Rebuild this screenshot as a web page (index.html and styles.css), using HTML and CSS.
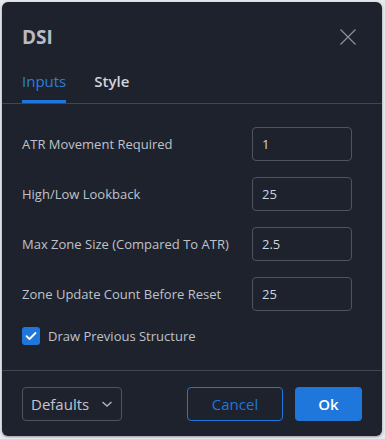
FILE: index.html
```html
<!DOCTYPE html>
<html>
<head>
<meta charset="utf-8">
<link rel="stylesheet" href="styles.css">
</head>
<body>
<div class="dialog">
  <div class="header">
    <div class="title">DSI</div>
    <div class="close">
      <svg width="16" height="16" viewBox="0 0 16 16"><path d="M0.5 0.5L15.5 15.5M15.5 0.5L0.5 15.5" stroke="#8f929b" stroke-width="1.2" fill="none"/></svg>
    </div>
  </div>
  <div class="tabs">
    <div class="tab active">Inputs</div>
    <div class="tab">Style</div>
  </div>
  <div class="content">
    <div class="row"><div class="label">ATR Movement Required</div><div class="input">1</div></div>
    <div class="row"><div class="label">High/Low Lookback</div><div class="input">25</div></div>
    <div class="row"><div class="label">Max Zone Size (Compared To ATR)</div><div class="input">2.5</div></div>
    <div class="row"><div class="label">Zone Update Count Before Reset</div><div class="input">25</div></div>
    <div class="check-row">
      <div class="checkbox">
        <svg width="12" height="10" viewBox="0 0 12 10"><path d="M1.5 5.2L4.5 8L10.5 2" stroke="#fff" stroke-width="1.8" fill="none" stroke-linecap="round" stroke-linejoin="round"/></svg>
      </div>
      <div class="check-label">Draw Previous Structure</div>
    </div>
  </div>
  <div class="footer">
    <div class="select">Defaults
      <svg width="12" height="8" viewBox="0 0 12 8"><path d="M1.5 2L6 6L10.5 2" stroke="#b2b5be" stroke-width="1.4" fill="none"/></svg>
    </div>
    <div class="spacer"></div>
    <div class="btn cancel">Cancel</div>
    <div class="btn ok">Ok</div>
  </div>
</div>
</body>
</html>
```
FILE: styles.css
```css
html, body { margin: 0; padding: 0; }
body {
  background: #e6e8ee;
  padding: 2px;
  font-family: "Open Sans", "Noto Sans", sans-serif;
}
.dialog {
  width: 380px;
  height: 434px;
  background: #1e222d;
  border-radius: 6px;
  display: flex;
  flex-direction: column;
  box-sizing: border-box;
  box-shadow: 0 1px 3px rgba(0,0,0,0.35);
}
.header {
  display: flex;
  align-items: center;
  justify-content: space-between;
  padding: 20px 26px 0 20px;
  height: 30px;
}
.title {
  font-size: 19px;
  font-weight: 700;
  color: #b8bbc4;
  line-height: 30px;
}
.close { width: 16px; height: 16px; display: flex; }
.tabs {
  display: flex;
  gap: 28px;
  padding: 10px 20px 0 20px;
  border-bottom: 1px solid #434651;
}
.tab {
  font-size: 15px;
  line-height: 20px;
  padding: 9px 0 9px 0;
  color: #d1d4dc;
  font-weight: 600;
  border-bottom: 3px solid transparent;
}
.tab.active {
  color: #2a7fde;
  font-weight: 400;
  border-bottom-color: #1f77db;
}
.content {
  padding: 23px 30px 25px 20px;
  display: flex;
  flex-direction: column;
  gap: 16px;
  flex: 1;
}
.row {
  display: flex;
  align-items: center;
  justify-content: space-between;
  height: 34px;
}
.label {
  font-size: 13px;
  color: #bfc2ca;
}
.input {
  width: 100px;
  height: 34px;
  box-sizing: border-box;
  border: 1px solid #50535e;
  border-radius: 4px;
  font-size: 13px;
  color: #d1d4dc;
  padding: 0 9px;
  display: flex;
  align-items: center;
}
.check-row {
  display: flex;
  align-items: center;
  gap: 8px;
  height: 18px;
}
.checkbox {
  width: 18px;
  height: 18px;
  border-radius: 3px;
  background: #1f77db;
  display: flex;
  align-items: center;
  justify-content: center;
}
.check-label { font-size: 13px; color: #bfc2ca; }
.footer {
  border-top: 1px solid #434651;
  padding: 16px 20px 16px 20px;
  display: flex;
  align-items: center;
}
.select {
  width: 100px;
  height: 34px;
  box-sizing: border-box;
  border: 1px solid #50535e;
  border-radius: 4px;
  display: flex;
  align-items: center;
  justify-content: space-between;
  padding: 0 8px 0 8px;
  font-size: 15px;
  color: #c3c6ce;
}
.spacer { flex: 1; }
.btn {
  height: 34px;
  box-sizing: border-box;
  border-radius: 4px;
  display: flex;
  align-items: center;
  justify-content: center;
  font-size: 15px;
}
.cancel {
  width: 96px;
  border: 1px solid #1f77db;
  color: #1f77db;
  margin-right: 12px;
}
.ok {
  width: 67px;
  background: #1f77db;
  color: #fff;
  font-weight: 600;
}
```
